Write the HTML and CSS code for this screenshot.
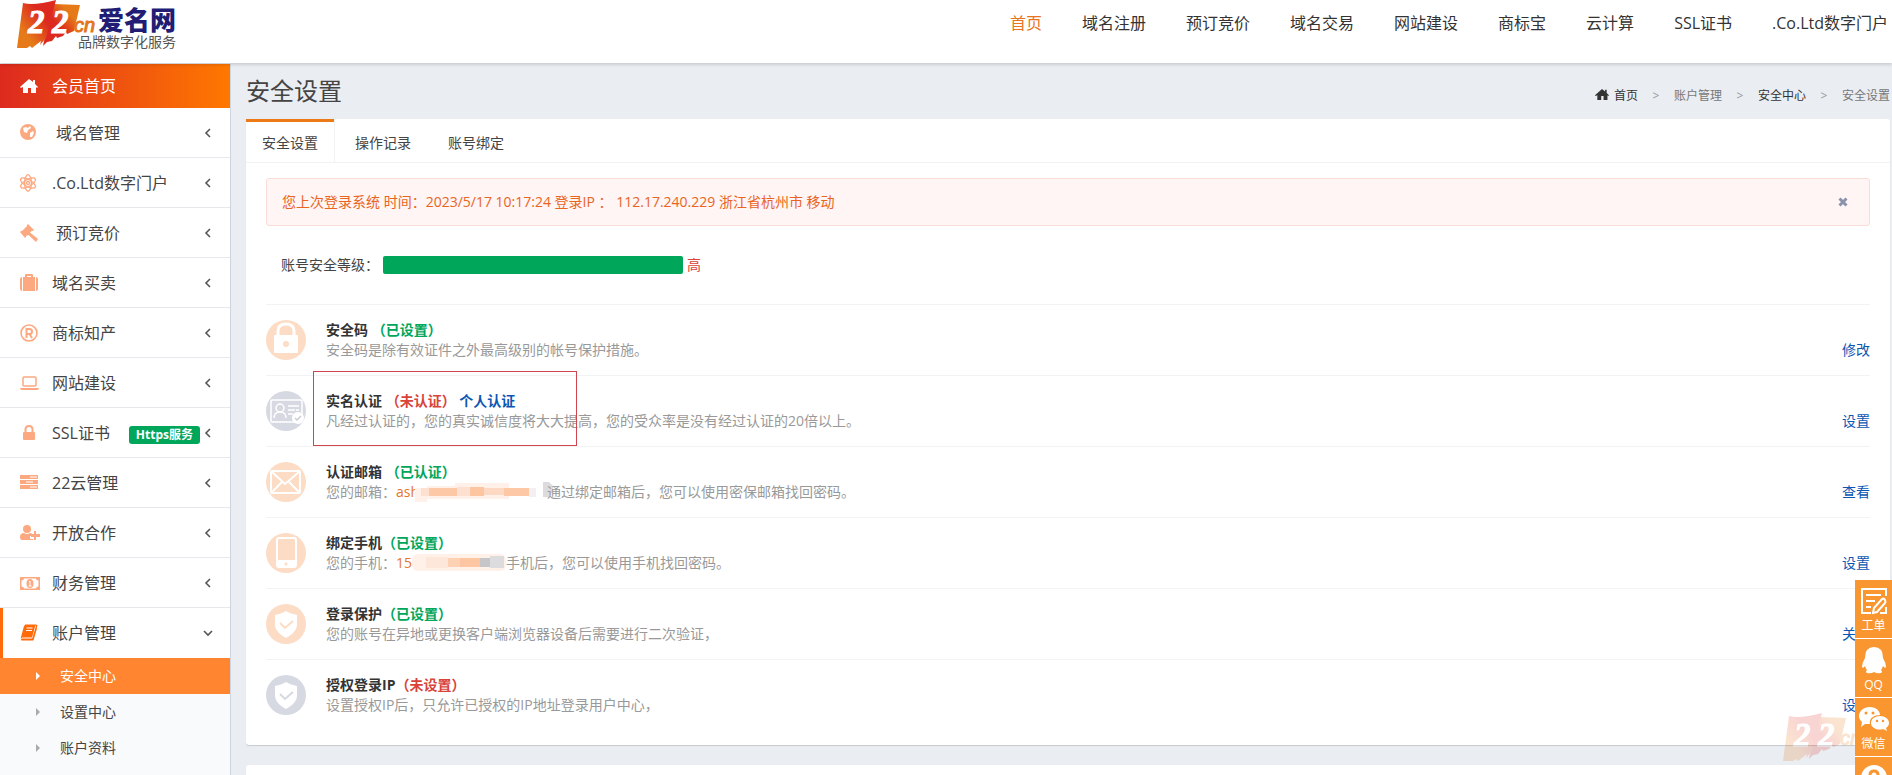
FILE: index.html
```html
<!DOCTYPE html>
<html lang="zh-CN">
<head>
  <meta charset="UTF-8" />
  <meta name="viewport" content="width=device-width, initial-scale=1.0"/>
  <title>安全设置 - 爱名网</title>
  <link rel="stylesheet" href="styles.css">
</head>
<body>
  <svg class="defs" width="0" height="0">
    <linearGradient id="flagLeft" x1="1" y1="0" x2="0" y2="1">
      <stop offset="0.350" stop-color="#dc2a20"/><stop offset="0.750" stop-color="#e67a18"/>
    </linearGradient>
    <linearGradient id="flagRight" x1="1" y1="0" x2="0" y2="1">
      <stop offset="0.250" stop-color="#e67a18"/><stop offset="0.550" stop-color="#dc2a20"/>
    </linearGradient>
    <symbol id="flag" viewBox="0 0 84 50">
      <path d="M40 4 66 5l-6 26-7 3-1-2-3 4-6 2-1-2-4 5-5 1-4 4 1-5Z" fill="url(#flagRight)"/>
      <path d="M9 3 Q20 6 42 0L32 38l-6 7 1-4-9 7-2-2-3 2H3Z" fill="url(#flagLeft)"/>
    </symbol>
    <symbol id="left" viewBox="0 0 8 10"><path d="M6 1 2 5l4 4" fill="none" stroke="currentColor" stroke-width="1.6"/></symbol>
    <symbol id="home" viewBox="0 0 18 16"><path d="M9 1 0 9l1 1 2-1v6h5v-5h3v5h5V9l1 1 1-1-3-3V2h-2v2Z" fill="currentColor"/></symbol>
    <symbol id="shield" viewBox="0 0 40 40">
      <path d="M20 7c3 2 7 3 11 4v9c0 6-4 10-11 14-7-4-11-8-11-14v-9c4-1 8-2 11-4Z" fill="#fff"/>
      <path d="m14 19 5 5 8-7" fill="none" stroke="currentColor" stroke-width="2"/>
    </symbol>
  </svg>

  <header class="header">
    <a class="logo" href="#">
      <svg class="logo-flag" width="84" height="50">
        <use href="#flag"/>
        <text x="14" y="33" class="flag-num">2</text>
        <text x="38" y="33" class="flag-num">2</text>
        <text x="60" y="32" class="flag-cn">cn</text>
      </svg>
      <span class="logo-text">
        <strong>爱名网</strong>
        <span>品牌数字化服务</span>
      </span>
    </a>
    <nav class="nav">
      <a class="active" href="#">首页</a>
      <a href="#">域名注册</a>
      <a href="#">预订竞价</a>
      <a href="#">域名交易</a>
      <a href="#">网站建设</a>
      <a href="#">商标宝</a>
      <a href="#">云计算</a>
      <a href="#">SSL证书</a>
      <a href="#">.Co.Ltd数字门户</a>
    </nav>
  </header>

  <div class="wrapper">
    <aside class="sidebar">
      <a class="item home" href="#">
        <svg class="icon" viewBox="0 0 20 18"><use href="#home" x="0" y="1" width="18" height="16"/></svg>会员首页
      </a>
      <a class="item" href="#">
        <svg class="icon" viewBox="0 0 20 18"><circle cx="8" cy="8" r="8" fill="currentColor"/><path d="M3 4l3-1 2 1 2-2 1 2-3 2-1 3-3-1Zm7 5 3-2 1 2-2 4h-2Z" fill="#fff"/></svg>
        <span class="indent">域名管理</span><svg class="arrow"><use href="#left"/></svg>
      </a>
      <a class="item" href="#">
        <svg class="icon" viewBox="0 0 20 18" fill="none" stroke="currentColor" stroke-width="1.3"><ellipse cx="8" cy="9" rx="3.4" ry="8.3"/><ellipse cx="8" cy="9" rx="3.4" ry="8.3" transform="rotate(60 8 9)"/><ellipse cx="8" cy="9" rx="3.4" ry="8.3" transform="rotate(120 8 9)"/><circle cx="8" cy="9" r="1.5"/></svg>
        .Co.Ltd数字门户<svg class="arrow"><use href="#left"/></svg>
      </a>
      <a class="item" href="#">
        <svg class="icon" viewBox="0 0 20 18" fill="currentColor"><path d="m8 0 6 6-1 1-1-.3L10 8.500l8 6.500-2 3-7.500-7L6 12v1l-1 1-5-6 1-1h1l5-5V1Z"/></svg>
        <span class="indent">预订竞价</span><svg class="arrow"><use href="#left"/></svg>
      </a>
      <a class="item" href="#">
        <svg class="icon" viewBox="0 0 20 18" fill="currentColor"><path d="M0 5q0-2 2-2v14q-2 0-2-2ZM18 5q0-2-2-2v14q2 0 2-2ZM3 3h2V1q0-1 1-1h6q1 0 1 1v2h2v14H3Zm4-1v1h4V2Z"/></svg>
        域名买卖<svg class="arrow"><use href="#left"/></svg>
      </a>
      <a class="item" href="#">
        <svg class="icon" viewBox="0 0 20 18" fill="none" stroke="currentColor"><circle cx="9" cy="9" r="8" stroke-width="1.600"/><path d="M6.500 14V5h3q2.500 0 2.500 2.500T9.500 10h-3m3 0 2.500 4" stroke-width="2"/></svg>
        商标知产<svg class="arrow"><use href="#left"/></svg>
      </a>
      <a class="item" href="#">
        <svg class="icon" viewBox="0 0 20 18"><rect x="3" y="3" width="13" height="9" rx="1" fill="none" stroke="currentColor" stroke-width="1.500"/><path d="M0 14h19q0 2-2 2H2q-2 0-2-2Z" fill="currentColor"/></svg>
        网站建设<svg class="arrow"><use href="#left"/></svg>
      </a>
      <a class="item" href="#">
        <svg class="icon" viewBox="0 0 20 18"><rect x="3" y="8" width="12" height="8" rx="1" fill="currentColor"/><path d="M5.500 8V5.500q0-3.500 3.500-3.500t3.500 3.500V8" fill="none" stroke="currentColor" stroke-width="2"/></svg>
        SSL证书<span class="badge">Https服务</span><svg class="arrow"><use href="#left"/></svg>
      </a>
      <a class="item" href="#">
        <svg class="icon" viewBox="0 0 20 18"><path d="M0 1h18v4H0Zm0 5h18v4H0Zm0 5h18v4H0Z" fill="currentColor"/><path d="M10 3h7M6 8h7M10 13h7" stroke="#fff"/></svg>
        22云管理<svg class="arrow"><use href="#left"/></svg>
      </a>
      <a class="item" href="#">
        <svg class="icon wide" viewBox="0 0 21 18" fill="currentColor"><circle cx="7" cy="5" r="4"/><path d="M0 13q0-4 4-4 3 2 6 0 2 0 2 1v2h-2v3h3v1H2q-2 0-2-3Z"/><path d="M14 7h2v3h4v3h-4v3h-2v-3h-3v-3h3Z"/></svg>
        开放合作<svg class="arrow"><use href="#left"/></svg>
      </a>
      <a class="item" href="#">
        <svg class="icon wide" viewBox="0 0 21 18"><path d="M0 3h20v13H0Z" fill="currentColor"/><path d="M4 4.500h12q0 2 2.500 2v6q-2.500 0-2.500 2H4q0-2-2.500-2v-6q2.500 0 2.500-2Z" fill="#fff"/><ellipse cx="10" cy="9.500" rx="3.500" ry="4.500" fill="currentColor"/><path d="m9 8 1-1v5m-1.500 0h3" stroke="#fff" fill="none"/></svg>
        财务管理<svg class="arrow"><use href="#left"/></svg>
      </a>
      <a class="item open" href="#">
        <svg class="icon" viewBox="0 0 20 18"><path d="M5 1h11q1 0 .6 1.200L13 14q-.4 1-1.500 1H2q-1 1 .5 1H13l3.500-12" fill="none" stroke="currentColor" stroke-width="1.200"/><path d="M5 1h10.500L12 13.500H2.500Q.500 14 .500 15L4 2Z" fill="currentColor"/><path d="M6.500 4h6M6 6.500h6" stroke="#fff"/></svg>
        账户管理<svg class="arrow" viewBox="0 0 10 10"><path d="m1 3 4 4 4-4" fill="none" stroke="currentColor" stroke-width="1.600"/></svg>
      </a>
      <div class="submenu">
        <a class="active" href="#">安全中心</a>
        <a href="#">设置中心</a>
        <a href="#">账户资料</a>
      </div>
    </aside>

    <main class="content">
      <div class="page-head">
        <h1>安全设置</h1>
        <div class="breadcrumb">
          <a href="#"><svg width="14" height="13"><use href="#home"/></svg>首页</a>
          <i>&gt;</i><span>账户管理</span><i>&gt;</i><a href="#">安全中心</a><i>&gt;</i><span>安全设置</span>
        </div>
      </div>

      <section class="panel">
        <div class="tabs">
          <button class="active" type="button">安全设置</button>
          <button type="button">操作记录</button>
          <button type="button">账号绑定</button>
        </div>

        <div class="panel-body">
          <div class="alert">
            <span>您上次登录系统 时间：2023/5/17 10:17:24 登录IP ：&nbsp;112.17.240.229 浙江省杭州市 移动</span>
            <button type="button" aria-label="关闭"><svg width="10" height="10" viewBox="0 0 10 10"><path d="m1.500 1.500 7 7m0-7-7 7" stroke="#8a93ab" stroke-width="3"/></svg></button>
          </div>

          <div class="level">账号安全等级：<span class="bar"></span><span class="red">高</span></div>

          <ul class="list">
            <li>
              <svg class="round" viewBox="0 0 40 40"><rect x="8" y="15" width="24" height="18" rx="1" fill="#fff"/><path d="M12 16v-5q0-7 8-7t8 7v5" fill="none" stroke="#fff" stroke-width="3"/><circle cx="20" cy="24" r="3" fill="currentColor"/></svg>
              <div class="info">
                <h4>安全码 <span class="green">（已设置）</span></h4>
                <p>安全码是除有效证件之外最高级别的帐号保护措施。</p>
              </div>
              <a class="action" href="#">修改</a>
            </li>
            <li>
              <svg class="round gray" viewBox="0 0 40 40" fill="none" stroke="#fff" stroke-width="1.500"><rect x="5" y="9" width="31" height="22" rx="1"/><circle cx="14" cy="17" r="4"/><path d="M8 27q0-6 6-6t6 6M22 15h11M22 19h7m1 0h3M22 23h5"/><circle cx="32" cy="27" r="6" fill="#fff" stroke="none"/><path d="m29 27 2 2 4-4" stroke="#c9ccd8"/></svg>
              <div class="info">
                <h4>实名认证 <span class="red">（未认证）</span> <a href="#">个人认证</a></h4>
                <p>凡经过认证的，您的真实诚信度将大大提高，您的受众率是没有经过认证的20倍以上。</p>
              </div>
              <a class="action" href="#">设置</a>
              <span class="mark"></span>
            </li>
            <li>
              <svg class="round" viewBox="0 0 40 40" fill="none" stroke="#fff" stroke-width="2"><rect x="5" y="9" width="29" height="22" rx="1"/><path d="m6 10 13 12 14-12M6 30l10-10m7 0 10 10"/></svg>
              <div class="info">
                <h4>认证邮箱 <span class="green">（已认证）</span></h4>
                <p>您的邮箱：<span class="orange">ash</span><svg class="mosaic" width="122" height="20" viewBox="0 0 122 20"><path d="M-4 6h12V4h28V1h54v16H8v3H-4Z" fill="#fff1ea"/><path d="M2 6h12v8H2z" fill="#fde0d0"/><path d="M10 6h28v8H10z" fill="#fdc8a6"/><path d="M38 5h13v9H38z" fill="#fde0d0"/><path d="M51 5h14v9H51z" fill="#fdc6a0"/><path d="M65 6h35v7H65z" fill="#fdd9c4"/><path d="M85 6h25v8H85z" fill="#fdc8a6"/><path d="M110 6h7v9h-7z" fill="#f4eff3"/></svg><svg class="mosaic" width="6" height="20" viewBox="0 0 6 20"><path d="M2 0h6l4 4v5l-4 6H2z" fill="#dcdcde"/></svg>通过绑定邮箱后，您可以使用密保邮箱找回密码。</p>
              </div>
              <a class="action" href="#">查看</a>
            </li>
            <li>
              <svg class="round" viewBox="0 0 40 40"><rect x="11" y="5" width="19" height="29" rx="2" fill="none" stroke="#fff" stroke-width="2"/><path d="M11 27h19v7H11Z" fill="#fff"/><circle cx="20" cy="31" r="1.500" fill="currentColor"/></svg>
              <div class="info">
                <h4>绑定手机<span class="green">（已设置）</span></h4>
                <p>您的手机：<span class="orange">15</span><svg class="mosaic" width="94" height="20" viewBox="0 0 94 20"><rect x="0" y="1" width="94" height="17" rx="6" fill="#fff0e8"/><path d="M14 4h22v11H14z" fill="#fde6da"/><path d="M36 5h12v9H36z" fill="#fdd2b4"/><path d="M48 5h20v9H48z" fill="#fcc6a2"/><path d="M68 5h10v9H68z" fill="#c6c6c8"/><path d="M78 3h14v12H78z" fill="#dcdcde"/></svg>手机后，您可以使用手机找回密码。</p>
              </div>
              <a class="action" href="#">设置</a>
            </li>
            <li>
              <svg class="round" viewBox="0 0 40 40"><use href="#shield"/></svg>
              <div class="info">
                <h4>登录保护<span class="green">（已设置）</span></h4>
                <p>您的账号在异地或更换客户端浏览器设备后需要进行二次验证，</p>
              </div>
              <a class="action" href="#">关闭</a>
            </li>
            <li>
              <svg class="round gray" viewBox="0 0 40 40"><use href="#shield"/></svg>
              <div class="info">
                <h4>授权登录IP<span class="red">（未设置）</span></h4>
                <p>设置授权IP后，只允许已授权的IP地址登录用户中心，</p>
              </div>
              <a class="action" href="#">设置</a>
            </li>
          </ul>
        </div>
      </section>

      <section class="panel next"></section>
    </main>
  </div>

  <svg class="watermark" width="84" height="50">
    <use href="#flag"/>
    <text x="14" y="33" class="flag-num">2</text>
    <text x="38" y="33" class="flag-num">2</text>
    <text x="60" y="32" class="flag-cn">cn</text>
  </svg>

  <div class="toolbar">
    <a href="#">
      <svg viewBox="0 0 28 28" fill="none" stroke="#fff" stroke-width="2"><path d="M26 9V2H2v24h9M26 20v6h-6M6 8h15M6 14h9M6 20h5"/><path d="m14 21 8-9q2-1 3 1t0 3l-8 9-4 1Z"/></svg>工单
    </a>
    <a href="#">
      <svg viewBox="0 0 28 28" fill="#fff"><path d="M14 1q9 0 9 11 3 5 3 9-1 2-3-1-1 3-2 4 2 2 0 3-4 1-7-1-3 2-7 1-2-1 0-3-1-1-2-4-2 3-3 1 0-4 3-9Q5 1 14 1Z"/></svg>QQ
    </a>
    <a href="#">
      <svg class="wechat" viewBox="0 0 32 28"><path d="M12 2c6 0 10 4 10 8-7 0-11 4-10 9l-5 0-4 3 1-5c-7-6-1-15 8-15Z" fill="#fff"/><path d="M22 11c5 0 9 3 9 7 0 3-2 4-3 5l1 3-4-2c-7 2-12-2-12-6s4-7 9-7Z" fill="#fff"/><g fill="#f9962f"><circle cx="8" cy="8" r="1.500"/><circle cx="15" cy="8" r="1.500"/><circle cx="19" cy="16" r="1.200"/><circle cx="25" cy="16" r="1.200"/></g></svg>微信
    </a>
    <a href="#" aria-label="帮助">
      <svg viewBox="0 0 28 28"><circle cx="14" cy="14" r="13" fill="#fff"/><path d="M10 11q0-4 4-4t4 4q0 2-4 5v2m0 2v3" fill="none" stroke="#f9962f" stroke-width="3"/></svg>
    </a>
  </div>
</body>
</html>
```
FILE: styles.css
```css
* {
  box-sizing: border-box;
}

body {
  margin: 0;
  height: 100vh;
  display: flex;
  flex-direction: column;
  overflow: hidden;
  font-family: 'Open Sans', 'Noto Sans CJK SC', sans-serif;
  font-size: 14px;
  line-height: 20px;
  color: #444;
  background: #eaedf2;
}

a {
  color: #0c56b3;
  text-decoration: none;
}

button {
  font: inherit;
  color: inherit;
  background: none;
  border: none;
  cursor: pointer;
}

.defs {
  position: absolute;
}

.green {
  color: #00a65a;
}

.red {
  color: #d9433a;
}

.orange {
  color: #e4762c;
}

/* header */
.header {
  flex: none;
  display: flex;
  justify-content: space-between;
  height: 63px;
  padding-left: 14px;
  background: #fff;
  box-shadow: 0 1px 4px rgba(0, 0, 0, 0.2);
  z-index: 1;
}

.logo {
  display: flex;
}

.logo-flag {
  flex: none;
}

.flag-num {
  font: italic bold 33px 'Liberation Serif', serif;
  fill: #fff;
  stroke: #fff;
}

.flag-cn {
  font: italic 20px 'Liberation Sans', sans-serif;
  fill: #e4761a;
  stroke: #e4761a;
}

.logo-text {
  display: flex;
  flex-direction: column;
  align-items: flex-end;
  margin-left: -20px;
  padding-top: 6px;
  color: #555;
}

.logo-text strong {
  font-size: 26px;
  font-weight: 900;
  line-height: 28px;
  color: #211c74;
}

.logo-text span {
  line-height: 16px;
}

.nav {
  display: flex;
  gap: 40px;
  padding: 10px 4px 0 0;
  font-size: 16px;
  line-height: 26px;
}

.nav a {
  color: #333;
}

.nav .active {
  color: #e8741e;
}

.wrapper {
  flex: 1;
  display: flex;
  min-height: 0;
  padding-top: 1px;
}

/* sidebar */
.sidebar {
  flex: none;
  width: 231px;
  background: #f8fafc;
  border-right: 1px solid #cfd5e0;
}

.item {
  display: flex;
  align-items: center;
  height: 50px;
  padding: 0 20px;
  background: #fff;
  border-bottom: 1px solid #e6e8ec;
  font-size: 16px;
  color: #444;
}

.item.home {
  height: 44px;
  color: #fff;
  background: linear-gradient(to right, #dd2a1f, #ff7800);
  border: none;
}

.item.open {
  padding-left: 17px;
  border-left: 3px solid #ff6a0a;
  border-bottom: none;
}

.icon {
  flex: none;
  width: 20px;
  height: 18px;
  margin-right: 12px;
  color: #fca981;
}

.icon.wide {
  width: 21px;
  margin-right: 11px;
}

.home .icon {
  color: #fff;
}

.open .icon {
  color: #ff6a0a;
}

.indent {
  padding-left: 4px;
}

.arrow {
  width: 8px;
  height: 10px;
  margin-left: auto;
  margin-right: -2px;
  color: #555;
}

.open .arrow {
  width: 10px;
  margin-right: -3px;
}

.badge {
  margin: 4px 0 0 auto;
  padding: 0 7px;
  border-radius: 3px;
  background: #00a65a;
  color: #fff;
  font-size: 12px;
  font-weight: bold;
  line-height: 18px;
}

.badge + .arrow {
  margin-left: 4px;
}

.submenu a {
  display: flex;
  align-items: center;
  gap: 20px;
  height: 36px;
  padding-left: 36px;
  color: #444;
}

.submenu a::before {
  content: '';
  border: 4px solid transparent;
  border-left-color: #aaa;
  border-right: none;
}

.submenu .active {
  color: #fff;
  background: #ff8530;
}

.submenu .active::before {
  border-left-color: #fff;
}

/* content */
.content {
  flex: 1;
  min-width: 0;
  padding: 0 2px 0 15px;
}

.page-head {
  display: flex;
  justify-content: space-between;
  align-items: center;
  height: 55px;
}

.page-head h1 {
  margin: 0;
  padding-bottom: 2px;
  font-size: 24px;
  font-weight: normal;
  line-height: 32px;
}

.breadcrumb {
  display: flex;
  padding-top: 8px;
  font-size: 12px;
  color: #777;
}

.breadcrumb a {
  color: #333;
}

.breadcrumb svg {
  margin-right: 5px;
  vertical-align: -1px;
}

.breadcrumb i {
  width: 36px;
  text-align: center;
  font-style: normal;
  color: #999;
}

.panel {
  background: #fff;
  border-radius: 3px;
  box-shadow: 0 1px 1px rgba(0, 0, 0, 0.15);
  margin-bottom: 20px;
}

.panel.next {
  height: 200px;
}

.tabs {
  display: flex;
  gap: 5px;
  border-bottom: 1px solid #f0f2f4;
}

.tabs button {
  height: 43px;
  padding: 2px 16px 0;
  border-top: 3px solid transparent;
}

.tabs .active {
  margin-bottom: -1px;
  background: #fff;
  border-top-color: #ec7a17;
  box-shadow: 1px 0 #f0f2f4;
}

.panel-body {
  padding: 15px 20px;
}

.alert {
  display: flex;
  justify-content: space-between;
  align-items: center;
  height: 48px;
  padding: 0 15px;
  background: #fff5f4;
  border: 1px solid #f9dcd6;
  border-radius: 3px;
  color: #e8641f;
}

.alert button {
  display: flex;
  padding: 6px;
}

.level {
  display: flex;
  align-items: center;
  height: 78px;
  padding-left: 15px;
}

.bar {
  width: 300px;
  height: 18px;
  margin: 0 4px;
  border-radius: 2px;
  background: #00a65a;
}

.list {
  margin: 0;
  padding: 0;
  list-style: none;
}

.list li {
  position: relative;
  display: flex;
  align-items: flex-end;
  gap: 20px;
  padding: 15px 0;
  border-top: 1px solid #f2f3f5;
}

.round {
  flex: none;
  width: 40px;
  height: 40px;
  border-radius: 50%;
  background: #fcdcc5;
  color: #fcdcc5;
}

.round.gray {
  background: #d6d9e2;
  color: #d6d9e2;
}

.info {
  flex: 1;
}

.info h4,
.info p {
  margin: 0;
  font-size: 14px;
}

.info h4 {
  color: #333;
}

.info p {
  color: #999;
}

.mosaic {
  vertical-align: top;
  overflow: visible;
}

/* highlight frame over the real-name row */
.mark {
  position: absolute;
  top: -5px;
  left: 47px;
  width: 264px;
  height: 75px;
  border: 1px solid #cf4550;
  z-index: 1;
}

/* floating parts */
.watermark {
  position: fixed;
  right: 28px;
  bottom: 12px;
  opacity: 0.2;
}

.toolbar {
  position: fixed;
  top: 580px;
  right: 0;
  width: 37px;
  z-index: 2;
}

.toolbar a {
  display: flex;
  flex-direction: column;
  align-items: center;
  height: 59px;
  padding-top: 7px;
  background: #f9962f;
  border-bottom: 1px solid #fff;
  color: #fff;
  font-size: 12px;
  line-height: 22px;
}

.toolbar svg {
  flex: none;
  width: 28px;
  height: 28px;
}

.toolbar .wechat {
  width: 32px;
}
```
